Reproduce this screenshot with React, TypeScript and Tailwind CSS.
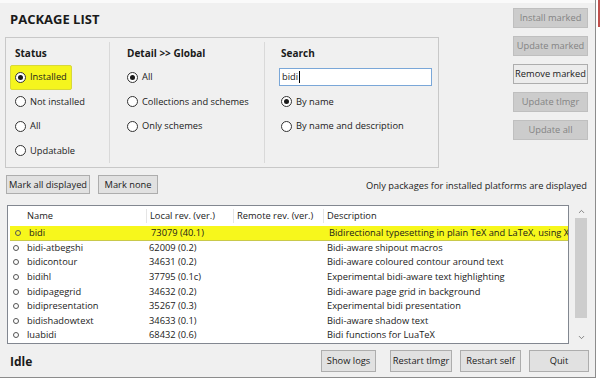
import { ChevronDown, ChevronUp } from "lucide-react";
import clsx from "clsx";

const packages = [
  ["bidi", "73079 (40.1)", "Bidirectional typesetting in plain TeX and LaTeX, using XeTeX engine"],
  ["bidi-atbegshi", "62009 (0.2)", "Bidi-aware shipout macros"],
  ["bidicontour", "34631 (0.2)", "Bidi-aware coloured contour around text"],
  ["bidihl", "37795 (0.1c)", "Experimental bidi-aware text highlighting"],
  ["bidipagegrid", "34632 (0.2)", "Bidi-aware page grid in background"],
  ["bidipresentation", "35267 (0.3)", "Experimental bidi presentation"],
  ["bidishadowtext", "34633 (0.1)", "Bidi-aware shadow text"],
  ["luabidi", "68432 (0.6)", "Bidi functions for LuaTeX"],
];

const Radio = ({ checked }: { checked?: boolean }) => (
  <span className="flex h-[11px] w-[11px] shrink-0 items-center justify-center rounded-full border border-[#333] bg-white">
    {checked && <span className="h-[5px] w-[5px] rounded-full bg-[#1a1a1a]" />}
  </span>
);

const Option = ({
  label,
  checked,
  className,
}: {
  label: string;
  checked?: boolean;
  className?: string;
}) => (
  <div className={clsx("flex h-[24.5px] items-center gap-[4px]", className)}>
    <Radio checked={checked} />
    <span>{label}</span>
  </div>
);

const Button = ({
  children,
  disabled,
  className,
}: {
  children: string;
  disabled?: boolean;
  className?: string;
}) => (
  <div
    className={clsx(
      "flex items-center justify-center whitespace-nowrap border",
      disabled
        ? "border-[#bfbfbf] bg-[#cccccc] text-[#838383]"
        : "border-[#adadad] bg-[#e1e1e1] text-[#1a1a1a]",
      className
    )}
  >
    {children}
  </div>
);

export default function App() {
  return (
    <div className="flex h-[381px] w-[600px] bg-white font-['Open_Sans',sans-serif] text-[9.3px] text-[#1a1a1a]">
      <div className="flex h-[378px] w-[596px] flex-col border-r border-b border-[#8c8c8c] bg-[#f0f0f0]">
        <div className="h-[3px] bg-[#fafafa]" />

        {/* filters + action buttons */}
        <div className="flex">
          <div className="flex-1">
            <div className="flex h-[34px] items-center pl-[10px] text-[13px] font-bold">
              PACKAGE LIST
            </div>
            <div className="ml-[5px] flex w-[434px] border border-[#c8c8c8] py-[4px]">
              <div className="w-[103px] pl-[9px]">
                <div className="flex h-[23px] items-center text-[10px] font-bold">Status</div>
                <div className="-ml-[5px] flex h-[24.5px] w-[62px] items-center gap-[4px] rounded-[2px] border border-[#d8d83a] bg-[#f5f51e] pl-[4px]">
                  <Radio checked />
                  <span>Installed</span>
                </div>
                <Option label="Not installed" />
                <Option label="All" />
                <Option label="Updatable" />
              </div>
              <div className="w-[155px] border-l border-[#d9d9d9] pl-[17px]">
                <div className="flex h-[23px] items-center text-[10px] font-bold">Detail &gt;&gt; Global</div>
                <Option label="All" checked />
                <Option label="Collections and schemes" />
                <Option label="Only schemes" />
              </div>
              <div className="flex-1 border-l border-[#d9d9d9] pl-[16px]">
                <div className="flex h-[23px] items-center text-[10px] font-bold">Search</div>
                <div className="flex h-[24.5px] items-center">
                  <div className="-ml-[2px] flex h-[18px] w-[153px] items-center border border-[#7aa7d8] bg-white pl-[2px]">
                    bidi
                    <span className="ml-px inline-block h-[12px] w-px bg-black" />
                  </div>
                </div>
                <Option label="By name" checked />
                <Option label="By name and description" />
              </div>
            </div>
          </div>
          <div className="mr-[7px] mt-[5px] flex w-[75px] flex-col gap-[8px]">
            <Button disabled className="h-[20px]">Install marked</Button>
            <Button disabled className="h-[20px]">Update marked</Button>
            <Button className="h-[20px] bg-[#ececec]">Remove marked</Button>
            <Button disabled className="h-[20px]">Update tlmgr</Button>
            <Button disabled className="h-[20px]">Update all</Button>
          </div>
        </div>

        <div className="mt-[7px] flex h-[19px] items-center justify-between pl-[6px] pr-[8px]">
          <div className="flex gap-[8px]">
            <Button className="h-[19px] w-[84px]">Mark all displayed</Button>
            <Button className="h-[19px] w-[60px]">Mark none</Button>
          </div>
          <span className="translate-y-[1px]">Only packages for installed platforms are displayed</span>
        </div>

        {/* package table */}
        <div className="mt-[11px] flex pl-[7px]">
          <div className="h-[139px] w-[562px] overflow-hidden border border-[#828790] bg-white">
            <div className="grid h-[20px] grid-cols-[15px_123px_87px_90px_1fr] items-center">
              <div />
              <div className="pl-[4px]">Name</div>
              <div className="border-l border-[#e5e5e5] pl-[3px]">Local rev. (ver.)</div>
              <div className="border-l border-[#e5e5e5] pl-[3px]">Remote rev. (ver.)</div>
              <div className="border-l border-[#e5e5e5] pl-[3px]">Description</div>
            </div>
            {packages.map(([name, local, desc], i) => (
              <div
                key={name}
                className={clsx(
                  "grid h-[14.6px] grid-cols-[15px_123px_87px_90px_1fr] items-center whitespace-nowrap leading-[14px]",
                  i === 0 && "ml-[2px] grid-cols-[13px_123px_87px_90px_1fr] border-b border-[#c9c94a] bg-[#f7f71c]"
                )}
              >
                <div className="flex justify-center">
                  <span className="h-[6px] w-[6px] rounded-full border border-[#555]" />
                </div>
                <div className="pl-[4px]">{name}</div>
                <div className="pl-[3px]">{local}</div>
                <div />
                <div className="overflow-x-clip pl-[4px] pr-[3px]">{desc}</div>
              </div>
            ))}
          </div>
          <div className="ml-[3px] flex h-[139px] w-[18px] flex-col items-center">
            <div className="flex h-[13px] items-center">
              <ChevronUp size={9} strokeWidth={2} className="text-[#606060]" />
            </div>
            <div className="h-[100px] w-[12px] bg-[#cdcdcd]" />
            <div className="flex-1" />
            <div className="flex h-[14px] items-center">
              <ChevronDown size={9} strokeWidth={2} className="text-[#606060]" />
            </div>
          </div>
        </div>

        {/* status bar */}
        <div className="flex flex-1 items-center pl-[10px] pr-[6px]">
          <span className="translate-y-[1px] text-[12px] font-bold">Idle</span>
          <div className="ml-auto flex gap-[8px]">
            <Button className="mr-[6px] h-[22px] w-[55px]">Show logs</Button>
            <Button className="h-[22px] w-[62px]">Restart tlmgr</Button>
            <Button className="h-[22px] w-[61px]">Restart self</Button>
            <Button className="h-[22px] w-[60px]">Quit</Button>
          </div>
        </div>
      </div>
      <div className="flex w-[4px] justify-end">
        <div className="h-[27px] w-[2px] bg-[#c0504d]" />
      </div>
    </div>
  );
}
